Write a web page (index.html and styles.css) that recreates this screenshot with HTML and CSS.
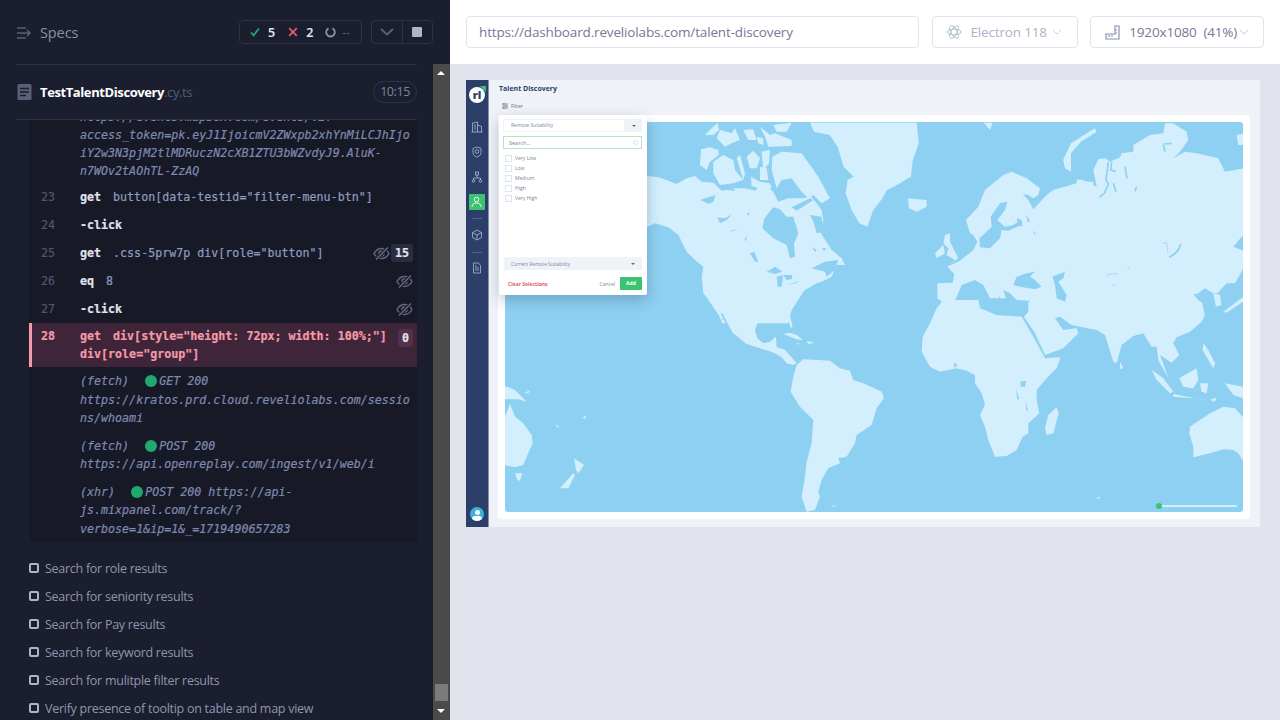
FILE: index.html
```html
<!DOCTYPE html>
<html>
<head>
    <title>TestTalentDiscovery</title>
    <link rel="stylesheet" href="styles.css">
</head>
<body>
<div class="runner">
    <div class="reporter">
        <div class="side-main">
            <div class="top-bar">
                <div class="specs-title">
                    <svg class="specs-icon" width="15" height="14" viewBox="0 0 15 14"><path d="M0 2h9M0 7h13M0 12h9M10 4l3 3-3 3" fill="none" stroke="#5a5f7a" stroke-width="1.6"/></svg>
                    <span>Specs</span>
                </div>
                <div class="stats">
                    <svg width="10" height="10" viewBox="0 0 10 10"><path d="M1 5.500l2.600 2.800L9 1.500" fill="none" stroke="#1fa971" stroke-width="1.800"/></svg>
                    <b class="stat-num">5</b>
                    <svg class="stat-gap" width="10" height="10" viewBox="0 0 10 10"><path d="M1.200 1.200l7.600 7.600M8.800 1.200l-7.600 7.600" fill="none" stroke="#e45770" stroke-width="1.800"/></svg>
                    <b class="stat-num">2</b>
                    <svg class="stat-gap2" width="11" height="11" viewBox="0 0 11 11"><path d="M3.500 1.400a4.300 4.300 0 1 0 4 0" fill="none" stroke="#8b90a6" stroke-width="1.800"/></svg>
                    <span class="stat-dash">--</span>
                </div>
                <div class="controls">
                    <div class="ctl-btn">
                        <svg width="14" height="8" viewBox="0 0 14 8"><path d="M1 1l6 5.500L13 1" fill="none" stroke="#5a5f7a" stroke-width="2"/></svg>
                    </div>
                    <div class="ctl-btn ctl-stop"><i class="stop"></i></div>
                </div>
            </div>
            <div class="spec-row">
                <svg width="15" height="16" viewBox="0 0 15 16"><rect width="14" height="16" x=".5" rx="1.500" fill="#5a5f7a"/><path d="M3 4.500h9M3 8h9M3 11.500h6" stroke="#1b1e2e" stroke-width="1.500"/></svg>
                <span class="spec-name">TestTalentDiscovery</span><span class="spec-ext">.cy.ts</span>
                <span class="duration">10:15</span>
            </div>
            <div class="log">
                <div class="cmd cmd-long">
                    <span class="num"></span>
                    <div class="cmd-body log-text">https://events.mapbox.com/events/v2?<br>access_token=pk.eyJ1IjoicmV2ZWxpb2xhYnMiLCJhIjo<br>iY2w3N3pjM2tlMDRuczN2cXB1ZTU3bWZvdyJ9.AluK-<br>n7WOv2tAOhTL-ZzAQ</div>
                </div>
                <div class="cmd"><span class="num">23</span><div class="cmd-body"><b>get</b><span class="sel">button[data-testid="filter-menu-btn"]</span></div></div>
                <div class="cmd"><span class="num">24</span><div class="cmd-body"><b>-click</b></div></div>
                <div class="cmd">
                    <span class="num">25</span>
                    <div class="cmd-body"><b>get</b><span class="sel">.css-5prw7p div[role="button"]</span></div>
                    <svg class="eye" width="17" height="13" viewBox="0 0 17 13"><use href="#eye-off"/></svg>
                    <span class="badge">15</span>
                </div>
                <div class="cmd">
                    <span class="num">26</span>
                    <div class="cmd-body"><b>eq</b><span class="sel">8</span></div>
                    <svg class="eye eye-end" width="17" height="13" viewBox="0 0 17 13"><use href="#eye-off"/></svg>
                </div>
                <div class="cmd">
                    <span class="num">27</span>
                    <div class="cmd-body"><b>-click</b></div>
                    <svg class="eye eye-end" width="17" height="13" viewBox="0 0 17 13"><use href="#eye-off"/></svg>
                </div>
                <div class="cmd cmd-failed">
                    <span class="num">28</span>
                    <div class="cmd-body"><b>get</b><span class="sel">div[style="height: 72px; width: 100%;"]</span><br>div[role="group"]</div>
                    <span class="badge badge-failed">0</span>
                </div>
                <div class="cmd cmd-xhr">
                    <span class="num"></span>
                    <div class="cmd-body log-text">(fetch)&nbsp;&nbsp;<i class="dot"></i>GET 200<br>https://kratos.prd.cloud.reveliolabs.com/sessio<br>ns/whoami</div>
                </div>
                <div class="cmd cmd-xhr">
                    <span class="num"></span>
                    <div class="cmd-body log-text">(fetch)&nbsp;&nbsp;<i class="dot"></i>POST 200<br>https://api.openreplay.com/ingest/v1/web/i</div>
                </div>
                <div class="cmd cmd-xhr">
                    <span class="num"></span>
                    <div class="cmd-body log-text">(xhr)&nbsp;&nbsp;<i class="dot"></i>POST 200 https://api-<br>js.mixpanel.com/track/?<br>verbose=1&amp;ip=1&amp;_=1719490657283</div>
                </div>
            </div>
            <ul class="tests">
                <li><i class="box"></i>Search for role results</li>
                <li><i class="box"></i>Search for seniority results</li>
                <li><i class="box"></i>Search for Pay results</li>
                <li><i class="box"></i>Search for keyword results</li>
                <li><i class="box"></i>Search for mulitple filter results</li>
                <li><i class="box"></i>Verify presence of tooltip on table and map view</li>
            </ul>
        </div>
        <div class="scrollbar">
            <i class="arrow-up"></i>
            <i class="thumb"></i>
            <i class="arrow-down"></i>
        </div>
    </div>

    <div class="preview">
        <div class="toolbar">
            <div class="field url">https://dashboard.reveliolabs.com/talent-discovery</div>
            <div class="field browser">
                <svg width="16" height="18" viewBox="0 0 16 18"><g fill="none" stroke="#a9c6cc" stroke-width="1"><ellipse cx="8" cy="9" rx="7" ry="3"/><ellipse cx="8" cy="9" rx="7" ry="3" transform="rotate(60 8 9)"/><ellipse cx="8" cy="9" rx="7" ry="3" transform="rotate(120 8 9)"/></g></svg>
                <span class="browser-name">Electron 118</span>
                <svg class="chev" width="10" height="6" viewBox="0 0 10 6"><path d="M1 1l4 4 4-4" fill="none" stroke="#d0d2e0"/></svg>
            </div>
            <div class="field viewport">
                <svg width="15" height="15" viewBox="0 0 15 15"><path d="M10 1h4v13H1v-5h9zM10 5h2M10 8h2M4 12V10M7 12V10" fill="none" stroke="#afb2c7" stroke-width="1.700"/></svg>
                <span class="vp-size">1920x1080&nbsp;&nbsp;(41%)</span>
                <svg class="chev-vp" width="10" height="6" viewBox="0 0 10 6"><path d="M1 1l4 4 4-4" fill="none" stroke="#c4c6d6"/></svg>
            </div>
        </div>
        <div class="stage">
            <div class="app">
                <div class="app-nav">
                    <div class="logo"><span class="logo-text">rl</span><i class="logo-tip"></i></div>
                    <svg class="nav-ico nav-first" viewBox="0 0 12 12"><path d="M1.500 11V2l5-1v10M6.500 4l4 1.500V11M0.500 11h11M3 4h2M3 6h2M3 8h2" /></svg>
                    <svg class="nav-ico" viewBox="0 0 12 12"><path d="M6 1l4 1.500v4C10 9 8 10.500 6 11 4 10.500 2 9 2 6.500v-4z"/><circle cx="6" cy="5.500" r="1.800"/></svg>
                    <svg class="nav-ico" viewBox="0 0 12 12"><path d="M6 4v3M2.500 9V7h7v2"/><rect x="4.500" y="1" width="3" height="3"/><circle cx="2.500" cy="10" r="1.300"/><circle cx="9.500" cy="10" r="1.300"/></svg>
                    <div class="nav-active"><svg class="nav-ico-on" viewBox="0 0 12 12"><circle cx="5.500" cy="3.500" r="2.300"/><path d="M1 11c0-3 2-4 4.500-4S10 8 10 11"/></svg></div>
                    <i class="nav-sep"></i>
                    <svg class="nav-ico nav-mid" viewBox="0 0 12 12"><path d="M6 1l4.500 2.500v5L6 11 1.500 8.500v-5zM1.500 3.500L6 6l4.500-2.500M6 6v5"/></svg>
                    <i class="nav-sep nav-sep2"></i>
                    <svg class="nav-ico nav-last" viewBox="0 0 12 12"><path d="M2.500 1h5l2 2.500V11h-7zM4 6h4M4 8h4M4 4h2"/></svg>
                    <div class="avatar"><i class="avatar-head"></i><i class="avatar-body"></i></div>
                </div>
                <div class="app-main">
                    <div class="app-title">Talent Discovery</div>
                    <div class="app-filter">
                        <svg width="6" height="6" viewBox="0 0 6 6"><path d="M0 1h6M0 3h6M0 5h6M2 0v2M4 2v2M2 4v2" stroke="#6b7590" stroke-width=".8"/></svg>
                        <span>Filter</span>
                    </div>
                    <div class="map-card">
                        <div class="map">
                            <svg class="map-svg" width="738" height="390" viewBox="505 122 738 390">
                                <!-- north america -->
                                <g transform="translate(645 120) scale(.3333)">
                                    <g class="land">
                                        <polygon points="-20,165 40,172 70,182 95,192 125,175 150,168 170,185 205,188 230,212 270,205 300,205 330,212 355,190 385,215 400,245 430,235 480,235 495,225 530,270 535,300 525,335 560,390 590,415 600,435 575,435 560,470 530,485 515,490 480,510 465,530 440,570 430,610 232,610 215,570 175,520 170,470 175,440 150,420 125,395 100,345 70,322 30,310 5,322 -20,320"/>
                                        <polygon points="180,45 200,25 218,8 222,30 205,45"/>
                                        <polygon points="215,55 225,30 260,40 270,25 285,60 260,70 240,80"/>
                                        <polygon points="295,30 325,28 335,60 310,60"/>
                                        <polygon points="345,20 375,45 390,40 440,60 440,78 370,80 360,50"/>
                                        <polygon points="385,15 440,8 425,35 395,35"/>
                                        <polygon points="335,50 355,55 355,75 340,70"/>
                                        <polygon points="168,88 195,82 220,90 222,105 195,125 185,150 165,135"/>
                                        <polygon points="205,125 235,105 265,120 270,150 295,180 265,190 225,195 205,160"/>
                                        <polygon points="275,115 285,105 300,160 295,180"/>
                                        <polygon points="305,110 325,92 345,115 335,145 315,145"/>
                                        <polygon points="345,140 365,145 370,180 345,180"/>
                                        <polygon points="350,95 375,90 372,130 355,150"/>
                                        <polygon points="382,110 410,95 470,100 520,170 555,235 530,250 505,225 490,235 470,215 440,175 410,180 395,205 380,150"/>
                                        <polygon points="318,170 345,185 375,190 380,205 320,205"/>
                                    </g>
                                    <g class="water">
                                        <polygon points="385,262 405,268 425,290 445,290 460,340 447,372 450,410 435,415 425,375 385,355 352,325 358,295"/>
                                        <polygon points="440,262 495,235 505,240 455,272"/>
                                        <polygon points="495,285 530,290 535,335 515,340 505,305"/>
                                        <polygon points="165,240 190,232 212,225 205,245 190,252 178,245"/>
                                        <polygon points="217,292 240,295 262,283 245,300 225,310"/>
                                        <polygon points="250,335 282,325 265,333"/>
                                        <polygon points="298,360 306,345 303,362"/>
                                        <polygon points="305,285 313,275 313,285"/>
                                        <polygon points="315,400 328,395 340,425 330,425"/>
                                        <polygon points="365,455 390,440 412,455 390,462"/>
                                        <polygon points="395,470 415,465 410,500 398,500"/>
                                        <polygon points="415,465 442,465 440,478 425,480"/>
                                        <polygon points="425,495 465,482 450,490"/>
                                        <polygon points="500,445 540,425 580,420 570,450 545,470 540,455"/>
                                        <polygon points="500,380 515,390 510,395"/>
                                        <polygon points="530,385 545,385 538,392"/>
                                        <polygon points="225,570 235,580 240,600 232,600"/>
                                        <path class="water-line" d="M225 205l45 5M300 195l35 10M380 205l25 35"/>
                                    </g>
                                </g>
                                <!-- greenland, iceland, arctic islands -->
                                <g transform="translate(640 110) scale(.3954 .3333)" class="land">
                                    <polygon points="430,38 700,38 705,100 690,150 685,200 650,225 625,240 610,270 590,300 575,350 555,340 535,300 520,250 525,210 540,200 515,170 500,110 480,75 440,65"/>
                                    <polygon points="678,265 700,268 725,270 725,290 700,305 680,295"/>
                                    <polygon points="870,38 892,38 885,60"/>
                                    <polygon points="1150,55 1155,65 1115,95 1090,130 1090,185 1075,175 1070,150 1090,100"/>
                                </g>
                                <!-- europe -->
                                <g transform="translate(920 170) scale(.3333)">
                                    <g class="land">
                                        <polygon points="52,340 98,338 103,312 82,290 120,272 160,240 172,215 160,195 150,190 138,150 175,110 195,60 250,15 275,5 320,25 360,55 355,75 340,85 325,75 308,72 325,90 340,118 380,75 400,60 470,40 480,28 500,35 520,35 520,402 75,402 52,385"/>
                                        <polygon points="75,195 90,190 90,215 115,265 85,285 105,270 80,255 85,235 70,220"/>
                                        <polygon points="45,250 70,225 75,250 50,265"/>
                                    </g>
                                    <g class="water">
                                        <polygon points="240,100 262,95 255,120 232,150 255,170 280,165 300,150 305,165 265,182 245,180 240,205 210,235 180,232 178,205 195,190 215,170 212,140"/>
                                        <polygon points="290,145 305,150 308,170 295,165"/>
                                        <polygon points="320,135 330,155 322,155"/>
                                        <polygon points="340,180 348,195 342,192"/>
                                        <polygon points="75,398 105,392 125,345 165,330 190,345 210,385 235,385 250,360 270,370 290,390 330,392 330,404 75,404"/>
                                        <polygon points="280,345 290,320 320,310 345,305 330,320 345,330 365,350 345,358 300,350"/>
                                        <polygon points="397,320 435,305 430,325 415,335 440,375 435,395 410,385 405,345"/>
                                    </g>
                                    <g class="land">
                                        <polygon points="180,320 200,330 235,365 215,380 205,360 185,340"/>
                                        <polygon points="235,355 250,360 258,385 240,385"/>
                                    </g>
                                </g>
                                <!-- asia, north part -->
                                <g transform="translate(1080 120) scale(.3333)">
                                    <g class="land">
                                        <polygon points="-10,178 20,185 50,200 40,150 55,118 75,115 90,125 120,112 125,100 160,95 160,75 210,45 250,40 255,10 280,10 320,35 325,60 300,95 280,115 315,95 350,100 415,115 435,155 490,145 490,345 460,380 490,392 490,445 465,490 440,490 412,520 400,520 375,505 352,522 380,545 365,552 -10,552"/>
                                        <polygon points="470,45 490,40 490,75 475,75"/>
                                        <polygon points="400,520 420,525 424,555 408,560"/>
                                        <polygon points="430,575 490,530 490,545 440,578"/>
                                    </g>
                                    <g class="water">
                                        <polygon points="340,522 352,522 380,545 365,552"/>
                                        <path class="water-line" d="M85 125l-7 55 7 12-12 28-15 12"/>
                                        <path class="water-line" d="M100 190l8 25M95 125l-3 25 15 5M135 140l6 35M170 200l-5 14M250 72l25-2M250 75l5 20"/>
                                        <path class="water-line" d="M302 372c-3 15-15 30-35 40"/>
                                        <path class="water-thin" d="M82 470l2-8h30M97 495h12M142 437l7 10M248 370l12-2 4 30"/>
                                    </g>
                                </g>
                                <!-- asia south, africa, australia -->
                                <g transform="translate(900 300) scale(.3333)">
                                    <g class="land">
                                        <polygon points="372,50 385,35 385,5 905,5 915,45 905,65 870,95 830,112 820,130 838,165 815,188 780,165 795,205 805,235 775,180 770,140 755,140 730,100 700,108 665,135 650,190 640,185 615,105 590,90 515,75 480,50 465,55 490,90 530,85 535,100 490,145 435,165 405,100"/>
                                        <polygon points="660,185 670,205 660,207"/>
                                        <polygon points="755,210 790,235 820,275 810,280 770,240"/>
                                        <polygon points="820,282 900,298 925,300 880,295 820,290"/>
                                        <polygon points="838,235 890,205 895,240 880,265 850,260"/>
                                        <polygon points="900,250 925,250 920,280 905,275"/>
                                        <polygon points="910,130 925,150 945,190 940,205 925,180 908,150"/>
                                        <polygon points="975,250 1029,260 1029,295 1000,285"/>
                                        <polygon points="930,300 950,292 945,305"/>
                                        <polygon points="870,380 930,340 970,320 1005,325 1029,352 1029,482 1015,460 1000,450 970,448 930,460 880,472 880,440 868,400"/>
                                        <polygon points="130,0 235,0 240,25 290,45 365,50 400,110 435,175 482,172 470,205 440,235 410,270 410,300 418,340 385,370 385,400 368,410 350,450 320,468 285,470 265,420 255,380 240,345 255,315 245,280 225,250 225,225 200,212 170,205 120,215 90,200 65,155 68,110 90,70 110,25"/>
                                        <polygon points="470,322 476,340 460,400 440,405 435,385 445,345"/>
                                        <polygon points="592,590 602,594 592,597"/>
                                    </g>
                                    <g class="water">
                                        <polygon points="362,245 378,242 375,260 362,260"/>
                                        <polygon points="348,265 358,298 352,298"/>
                                        <polygon points="377,305 384,332 379,332"/>
                                        <polygon points="160,190 172,192 165,205"/>
                                    </g>
                                </g>
                                <!-- central and south america, oceania -->
                                <g transform="translate(460 300) scale(.3333)">
                                    <g class="land">
                                        <polygon points="740,-10 765,30 800,70 815,95 842,118 860,132 900,145 925,152 945,160 965,172 980,190 1000,195 1010,190 1000,178 975,150 970,148 950,142 948,110 930,125 910,130 892,115 885,90 895,62 925,50 965,48 985,60 993,85 998,78 988,40 1020,-10"/>
                                        <polygon points="970,102 990,98 1010,105 1030,120 1010,118 985,108"/>
                                        <polygon points="1040,122 1065,128 1045,132"/>
                                        <polygon points="1008,130 1020,130 1015,134"/>
                                        <polygon points="1010,195 1030,178 1075,180 1110,182 1140,205 1170,212 1180,240 1210,250 1265,275 1272,295 1250,325 1235,375 1190,405 1185,430 1160,470 1135,475 1140,490 1105,505 1085,540 1075,575 1080,590 1065,630 1040,635 1025,590 1035,530 1040,485 1055,430 1060,360 1020,320 992,275 1000,230"/>
                                        <polygon points="135,258 165,270 180,285 200,305 175,298 135,298"/>
                                        <polygon points="192,280 210,270 205,280"/>
                                        <polygon points="135,350 150,312 165,350 190,370 215,405 218,430 200,470 190,495 165,502 135,495"/>
                                        <polygon points="165,520 187,520 180,542 172,540"/>
                                        <polygon points="342,475 372,495 355,520 348,510"/>
                                        <polygon points="340,520 345,525 325,565 300,565"/>
                                        <polygon points="285,373 300,382 292,382"/>
                                        <polygon points="366,354 380,346 376,356"/>
                                        <polygon points="1115,618 1132,615 1120,621"/>
                                    </g>
                                    <path class="water-line" d="M785 40l15 30 15 27"/>
                                </g>
                            </svg>
                            <div class="scale"><i class="scale-dot"></i><i class="scale-line"></i></div>
                        </div>
                    </div>
                    <div class="filter-panel">
                        <div class="fp-select"><div class="fp-select-text">Remote Suitability</div><div class="fp-select-btn"><i class="fp-caret"></i></div></div>
                        <div class="fp-search"><span class="fp-cursor"></span>Search...
                            <svg class="fp-glass" width="6" height="6" viewBox="0 0 6 6"><circle cx="2.500" cy="2.500" r="2" fill="none" stroke="#cfd6de" stroke-width=".6"/><path d="M4 4l1.800 1.800" stroke="#cfd6de" stroke-width=".6"/></svg>
                        </div>
                        <div class="fp-list">
                            <div class="fp-item"><i class="fp-check"></i>Very Low</div>
                            <div class="fp-item"><i class="fp-check"></i>Low</div>
                            <div class="fp-item"><i class="fp-check"></i>Medium</div>
                            <div class="fp-item"><i class="fp-check"></i>High</div>
                            <div class="fp-item"><i class="fp-check"></i>Very High</div>
                        </div>
                        <div class="fp-current"><span>Current Remote Suitability</span><i class="fp-caret"></i></div>
                        <div class="fp-foot">
                            <span class="fp-clear">Clear Selections</span>
                            <span class="fp-cancel">Cancel</span>
                            <span class="fp-add">Add</span>
                        </div>
                    </div>
                </div>
            </div>
        </div>
    </div>
</div>
<svg class="defs" width="0" height="0">
    <symbol id="eye-off" viewBox="0 0 17 13">
        <path d="M1 6.500C3 3 5.500 1.500 8.500 1.500S14 3 16 6.500C14 10 11.500 11.500 8.500 11.500S3 10 1 6.500z" fill="none" stroke="#62677f" stroke-width="1.500"/>
        <circle cx="8.500" cy="6.500" r="2.500" fill="none" stroke="#62677f" stroke-width="1.500"/>
        <path d="M15 .5L3 12.500" stroke="#171926" stroke-width="3.500"/>
        <path d="M15 .5L3 12.500" stroke="#62677f" stroke-width="1.500"/>
    </symbol>
</svg>
</body>
</html>
```

FILE: styles.css
```css
* {
    box-sizing: border-box;
}

html,
body {
    margin: 0;
    height: 720px;
    overflow: hidden;
}

body {
    font-family: "Open Sans", "Noto Sans", sans-serif;
}

i {
    display: block;
    font-style: normal;
}

.defs {
    display: block;
    height: 0;
}

.runner {
    display: flex;
    width: 1280px;
    height: 720px;
}

/* left side */

.reporter {
    display: flex;
    width: 450px;
    height: 720px;
    background: #1b1e2e;
    overflow: hidden;
}

.side-main {
    width: 433px;
    padding-left: 16px;
    padding-right: 16px;
    flex-shrink: 0;
}

.top-bar {
    display: flex;
    align-items: flex-start;
    height: 65px;
    width: 401px;
    padding-top: 20px;
    border-bottom: 1px solid #2e3247;
}

.specs-title {
    display: flex;
    align-items: center;
    height: 24px;
    padding-top: 1px;
    padding-left: 1px;
    font-size: 14.500px;
    letter-spacing: -.1px;
    color: #8b90a6;
}

.specs-icon {
    margin-right: 8px;
}

.stats {
    display: flex;
    align-items: center;
    flex-shrink: 0;
    width: 123px;
    height: 24px;
    margin-left: auto;
    padding-left: 10px;
    border: 1px solid #2e3247;
    border-radius: 4px;
}

.stat-num {
    margin-left: 8px;
    font-family: "Noto Sans", sans-serif;
    font-size: 12.500px;
    font-weight: 600;
    color: #e1e3ed;
}

.stat-gap {
    margin-left: 13px;
}

.stat-gap2 {
    margin-left: 12px;
}

.stat-dash {
    margin-left: 6px;
    font-size: 12px;
    color: #5a5f7a;
}

.controls {
    display: flex;
    flex-shrink: 0;
    width: 62px;
    height: 24px;
    margin-left: 9px;
    margin-right: -16px;
    border: 1px solid #2e3247;
    border-radius: 4px;
}

.ctl-btn {
    display: flex;
    align-items: center;
    justify-content: center;
    width: 31px;
    height: 22px;
}

.ctl-stop {
    border-left: 1px solid #2e3247;
}

.stop {
    width: 10px;
    height: 10px;
    border-radius: 1px;
    background: #afb3c7;
}

.scrollbar {
    position: relative;
    width: 17px;
    flex-shrink: 0;
    margin-top: 64px;
    background: #4a4a4a;
}

.arrow-up,
.arrow-down {
    position: absolute;
    left: 4px;
    width: 0;
    height: 0;
    border-left: 4px solid transparent;
    border-right: 4px solid transparent;
}

.arrow-up {
    top: 7px;
    border-bottom: 4px solid #fff;
}

.arrow-down {
    bottom: 7px;
    border-top: 4px solid #fff;
}

.thumb {
    position: absolute;
    left: 2px;
    top: 620px;
    width: 13px;
    height: 17px;
    background: #7b7b7b;
}

.spec-row {
    display: flex;
    align-items: center;
    height: 55px;
    width: 401px;
    padding-left: 1px;
    border-bottom: 1px solid #2e3247;
}

.spec-name {
    margin-left: 8px;
    font-size: 13px;
    font-weight: 700;
    letter-spacing: -.4px;
    color: #fff;
}

.spec-ext {
    font-size: 13px;
    letter-spacing: -.4px;
    color: #565b75;
}

.duration {
    margin-left: auto;
    padding: 0 6px;
    height: 22px;
    line-height: 20px;
    font-size: 12.500px;
    letter-spacing: -.4px;
    color: #7f84a0;
    border: 1px solid #2e3247;
    border-radius: 11px;
}

/* command log */

.log {
    display: flex;
    flex-direction: column;
    flex-shrink: 0;
    justify-content: flex-end;
    width: 388px;
    height: 422px;
    margin-left: 13px;
    background: #171926;
    overflow: hidden;
    font-family: "DejaVu Sans Mono", monospace;
    font-size: 11.660px;
    line-height: 18px;
    color: #8f9cc2;
    -webkit-text-stroke: .2px;
}

.cmd {
    display: flex;
    align-items: center;
    flex-shrink: 0;
    min-height: 28px;
    padding-right: 4px;
}

.cmd-long {
    align-items: flex-start;
    padding-bottom: 3px;
}

.num {
    flex-shrink: 0;
    width: 51px;
    padding-left: 12px;
    color: #4f5570;
}

.cmd-body {
    flex: 1;
    word-break: break-all;
}

.cmd-body b {
    font-weight: 700;
    color: #e1e3ed;
}

.sel {
    margin-left: 12px;
}

.log-text {
    font-style: italic;
    color: #7f8ab0;
}

.eye {
    flex-shrink: 0;
    margin-right: 1px;
}

.eye-end {
    margin-right: 0;
}

.badge {
    flex-shrink: 0;
    width: 22px;
    height: 18px;
    text-align: center;
    font-weight: 700;
    color: #e1e3ed;
    background: #2a2d40;
    border-radius: 3px;
}

.cmd-failed {
    min-height: 44px;
    padding: 4px 4px 4px 0;
    border-left: 3px solid #f59aa9;
    background: #3f2539;
    color: #f59aa9;
    align-items: flex-start;
}

.cmd-failed .num {
    width: 48px;
    padding-left: 9px;
    color: #f59aa9;
    font-weight: 700;
}

.cmd-failed .cmd-body,
.cmd-failed .cmd-body b {
    color: #f59aa9;
    font-weight: 700;
}

.badge-failed {
    width: 15px;
    margin-top: 2px;
    background: #54304a;
}

.cmd-xhr {
    align-items: flex-start;
    padding-top: 5px;
    padding-bottom: 4px;
    line-height: 18.500px;
}

.dot {
    display: inline-block;
    width: 12px;
    height: 12px;
    margin-left: 2px;
    margin-right: 2px;
    vertical-align: -2px;
    border-radius: 50%;
    background: #1fa971;
}

.tests {
    list-style: none;
    margin: 12px 0 0 13px;
    padding: 0;
    font-size: 12.500px;
    letter-spacing: -.27px;
    color: #9095ad;
}

.tests li {
    display: flex;
    align-items: center;
    height: 28px;
    white-space: nowrap;
}

.box {
    width: 10px;
    height: 10px;
    margin-right: 6px;
    border: 2px solid #afb3c7;
    border-radius: 2px;
    background: #1b1e2e;
}

/* right side */

.preview {
    width: 830px;
    height: 720px;
}

.toolbar {
    display: flex;
    gap: 12px;
    height: 64px;
    padding: 16px;
    background: #fff;
}

.field {
    display: flex;
    align-items: center;
    height: 32px;
    border: 1px solid #e1e3ed;
    border-radius: 4px;
    font-size: 13.500px;
    white-space: nowrap;
}

.url {
    width: 454px;
    padding-left: 12px;
    letter-spacing: -.15px;
    color: #747994;
}

.browser {
    width: 146px;
    margin-left: 1px;
    padding-left: 13px;
    letter-spacing: -.15px;
    color: #afb2c7;
}

.browser-name {
    margin-left: 8px;
}

.chev {
    margin-left: 5px;
}

.viewport {
    width: 174px;
    padding-left: 14px;
    letter-spacing: -.15px;
    color: #747994;
}

.vp-size {
    margin-left: 9px;
}

.chev-vp {
    margin-left: 2px;
}

.stage {
    height: 656px;
    padding: 16px;
    background: #e1e3ed;
}

.app {
    display: flex;
    width: 794px;
    height: 447px;
    background: #eff3f8;
    color: #2b3f68;
}

.app-nav {
    display: flex;
    flex-direction: column;
    align-items: center;
    flex-shrink: 0;
    width: 23px;
    height: 447px;
    padding-top: 7px;
    background: #2c3f68;
    border-right: 1px solid #8693ad;
}

.logo {
    position: relative;
    display: flex;
    align-items: center;
    justify-content: center;
    width: 16px;
    height: 16px;
    border-radius: 50%;
    background: #fff;
}

.logo-text {
    font-size: 11px;
    line-height: 16px;
    font-weight: 800;
    color: #2c3f68;
}

.logo-tip {
    position: absolute;
    right: -1px;
    top: -1px;
    width: 0;
    height: 0;
    border-left: 6px solid transparent;
    border-top: 6px solid #3cc36f;
}

.nav-ico {
    width: 12px;
    height: 12px;
    margin-top: 13px;
    fill: none;
    stroke: #aeb9cf;
    stroke-width: .8;
}

.nav-first {
    margin-top: 18px;
}

.nav-active {
    display: flex;
    align-items: center;
    justify-content: center;
    width: 16px;
    height: 16px;
    margin-top: 11px;
    background: #3cc36f;
    border-radius: 1px;
}

.nav-ico-on {
    width: 12px;
    height: 12px;
    fill: none;
    stroke: #fff;
    stroke-width: .9;
}

.nav-sep {
    width: 10px;
    height: 1px;
    margin-top: 8px;
    background: #4f6288;
}

.nav-mid {
    margin-top: 10px;
}

.nav-sep2 {
    margin-top: 11px;
}

.nav-last {
    margin-top: 9px;
}

.avatar {
    width: 14px;
    height: 14px;
    margin-top: auto;
    margin-bottom: 6px;
    border-radius: 50%;
    background: #3bb1de;
    overflow: hidden;
}

.avatar-head {
    width: 5px;
    height: 5px;
    margin: 2.500px auto 0;
    border-radius: 50%;
    background: #fff;
}

.avatar-body {
    width: 10px;
    height: 5px;
    margin: 1px auto 0;
    border-radius: 3px 3px 0 0;
    background: #fff;
}

.app-main {
    position: relative;
    flex: 1;
    padding-left: 9px;
}

.app-title {
    height: 15px;
    margin-top: 2px;
    padding-top: 2px;
    padding-left: 1px;
    font-size: 7px;
    line-height: 10px;
    font-weight: 700;
    color: #2c3f68;
}

.app-filter {
    display: flex;
    align-items: center;
    gap: 3px;
    height: 18px;
    padding-left: 4px;
    font-size: 5px;
    color: #5f6b85;
}

.map-card {
    width: 752px;
    height: 404px;
    padding: 7px;
    background: #fff;
    border-radius: 3px;
}

.map {
    position: relative;
    width: 738px;
    height: 390px;
    background: #8ed0f1;
    border-radius: 3px;
    overflow: hidden;
}

.map-svg {
    display: block;
}

.land {
    fill: #d3effd;
}

.water {
    fill: #8ed0f1;
}

.water-line {
    fill: none;
    stroke: #8ed0f1;
    stroke-width: 5;
}

.water-thin {
    fill: none;
    stroke: #8ed0f1;
    stroke-width: 2;
}

.scale {
    position: absolute;
    left: 651px;
    bottom: 3px;
    display: flex;
    align-items: center;
}

.scale-dot {
    width: 6px;
    height: 6px;
    border-radius: 50%;
    background: #3cc36f;
}

.scale-line {
    width: 75px;
    height: 2px;
    background: #d3effd;
}

/* filter dropdown over the map */

.filter-panel {
    position: absolute;
    left: 10px;
    top: 35px;
    display: flex;
    flex-direction: column;
    width: 148px;
    height: 180px;
    padding: 4px 5px 4px 4px;
    background: #fff;
    border-radius: 2px;
    box-shadow: 0 5px 14px rgba(30, 50, 80, .28);
    font-size: 5px;
    color: #7d8699;
}

.fp-select {
    display: flex;
    height: 13px;
}

.fp-select-text {
    flex: 1;
    padding-left: 7px;
    line-height: 11px;
    border: 1px solid #f0f3f6;
}

.fp-select-btn {
    display: flex;
    align-items: center;
    justify-content: center;
    width: 17px;
    background: #eef2f6;
}

.fp-caret {
    width: 0;
    height: 0;
    border-left: 2px solid transparent;
    border-right: 2px solid transparent;
    border-top: 2px solid #5f6b85;
}

.fp-search {
    display: flex;
    align-items: center;
    height: 13px;
    margin-top: 4px;
    padding-left: 5px;
    font-size: 5.500px;
    border: 1px solid #b5e5c6;
    color: #7a8499;
}

.fp-glass {
    margin-left: auto;
    margin-right: 2px;
}

.fp-list {
    height: 104px;
    margin-top: 4px;
    margin-left: 2px;
}

.fp-item {
    display: flex;
    align-items: center;
    gap: 3px;
    height: 10px;
}

.fp-check {
    width: 7px;
    height: 7px;
    border: 1px solid #dfe4ea;
}

.fp-current {
    display: flex;
    align-items: center;
    justify-content: space-between;
    height: 13px;
    margin-left: 1px;
    padding: 0 7px;
    font-size: 4.800px;
    background: #eff3f8;
}

.fp-foot {
    display: flex;
    align-items: center;
    height: 13px;
    margin-top: 7px;
    padding-left: 5px;
}

.fp-clear {
    color: #e25c5c;
    font-weight: 700;
}

.fp-cancel {
    margin-left: auto;
    margin-right: 5px;
}

.fp-add {
    width: 22px;
    height: 13px;
    line-height: 13px;
    text-align: center;
    color: #fff;
    font-weight: 700;
    background: #3cc36f;
    border-radius: 1px;
}
```
